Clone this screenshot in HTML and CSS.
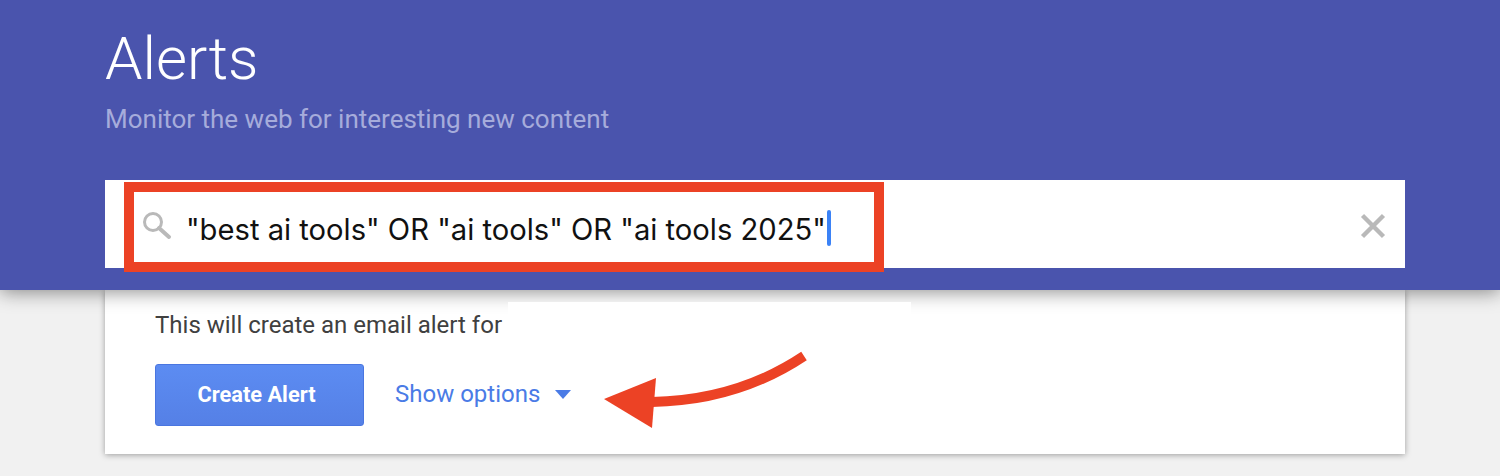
FILE: index.html
```html
<!DOCTYPE html>
<html lang="en">
<head>
<meta charset="utf-8">
<title>Alerts</title>
<link rel="stylesheet" href="styles.css">
</head>
<body>
<div class="page">
  <header class="header">
    <h1 class="title">Alerts</h1>
    <p class="subtitle">Monitor the web for interesting new content</p>
    <div class="search">
      <svg class="search-icon" width="30" height="30" viewBox="0 0 30 30" aria-hidden="true">
        <circle cx="11" cy="11" r="8.5" fill="none" stroke="#b9b9b9" stroke-width="3"/>
        <path d="M17 17L27 26" fill="none" stroke="#b9b9b9" stroke-width="4" stroke-linecap="round"/>
      </svg>
      <span class="query">"best ai tools" OR "ai tools" OR "ai tools 2025"</span><span class="caret"></span>
      <svg class="clear-icon" width="26" height="26" viewBox="0 0 26 26" aria-hidden="true">
        <path d="M2.5 2.5L23.5 23.5M23.5 2.5L2.5 23.5" fill="none" stroke="#b9b9b9" stroke-width="4.4"/>
      </svg>
      <div class="highlight"></div>
    </div>
  </header>
  <section class="card">
    <p class="note">This will create an email alert for</p>
    <div class="actions">
      <button class="create">Create Alert</button>
      <span class="options">Show options</span>
      <span class="triangle"></span>
    </div>
    <div class="redaction"></div>
    <svg class="arrow" width="220" height="90" viewBox="0 0 220 90" aria-hidden="true">
      <path d="M202 11C160 39 108 56 50 57" fill="none" stroke="#ec4225" stroke-width="10"/>
      <path d="M2 54L54 33L50 83Z" fill="#ec4225"/>
    </svg>
  </section>
</div>
</body>
</html>
```
FILE: styles.css
```css
* { box-sizing: border-box; }
html, body { margin: 0; padding: 0; }
body { background: #f1f1f1; font-family: Roboto, "Liberation Sans", sans-serif; }
.page { height: 476px; overflow: hidden; }
.header {
  position: relative;
  z-index: 2;
  height: 290px;
  padding: 24px 95px 0 105px;
  background: #4a54ad;
  box-shadow: 0 2px 18px rgba(0, 0, 0, 0.45);
}
.title {
  margin: 0;
  font-size: 60px;
  font-weight: 300;
  line-height: 70px;
  color: #fff;
}
.subtitle {
  margin: 7px 0 0;
  font-size: 26px;
  line-height: 36px;
  color: #a6acdb;
}
.search {
  position: relative;
  display: flex;
  align-items: center;
  height: 88px;
  margin-top: 43px;
  padding-left: 37px;
  background: #fff;
}
.search-icon { flex: none; margin: 4px 14px 0 0; }
.query {
  margin-top: 10px;
  font-family: Inter, "Liberation Sans", sans-serif;
  font-size: 29.2px;
  color: #111;
  white-space: nowrap;
}
.caret { flex: none; width: 4px; height: 36px; margin: 8px 0 0 1px; border-radius: 2px; background: #3b82f6; }
.clear-icon { flex: none; margin: 4px 19px 0 auto; }
.highlight {
  position: absolute;
  left: 19px;
  top: 2px;
  width: 760px;
  height: 90px;
  border: 10px solid #ec4225;
}
.card {
  position: relative;
  height: 164px;
  margin: 0 95px 0 105px;
  padding: 16px 50px 0;
  background: #fff;
  box-shadow: 0 1px 6px rgba(0, 0, 0, 0.35);
}
.note {
  margin: 0;
  font-size: 24px;
  line-height: 38px;
  color: #404040;
}
.actions { display: flex; align-items: center; margin-top: 20px; }
.create {
  width: 209px;
  height: 62px;
  padding: 0 6px 2px 0;
  border: 1px solid #4a76e0;
  border-radius: 3px;
  background: linear-gradient(#5c8cf2, #5580e6);
  color: #fff;
  font-family: Roboto, "Liberation Sans", sans-serif;
  font-size: 21.8px;
  font-weight: 700;
}
.options { margin: -2px 0 0 31px; font-size: 24px; color: #4a7be6; }
.triangle {
  width: 0;
  height: 0;
  margin: -2px 0 0 15px;
  border-left: 8px solid transparent;
  border-right: 8px solid transparent;
  border-top: 9px solid #4a7be6;
}
.redaction {
  position: absolute;
  z-index: 3;
  left: 403px;
  top: 12px;
  width: 403px;
  height: 40px;
  background: #fff;
}
.arrow { position: absolute; z-index: 4; left: 497px; top: 55px; }
```
